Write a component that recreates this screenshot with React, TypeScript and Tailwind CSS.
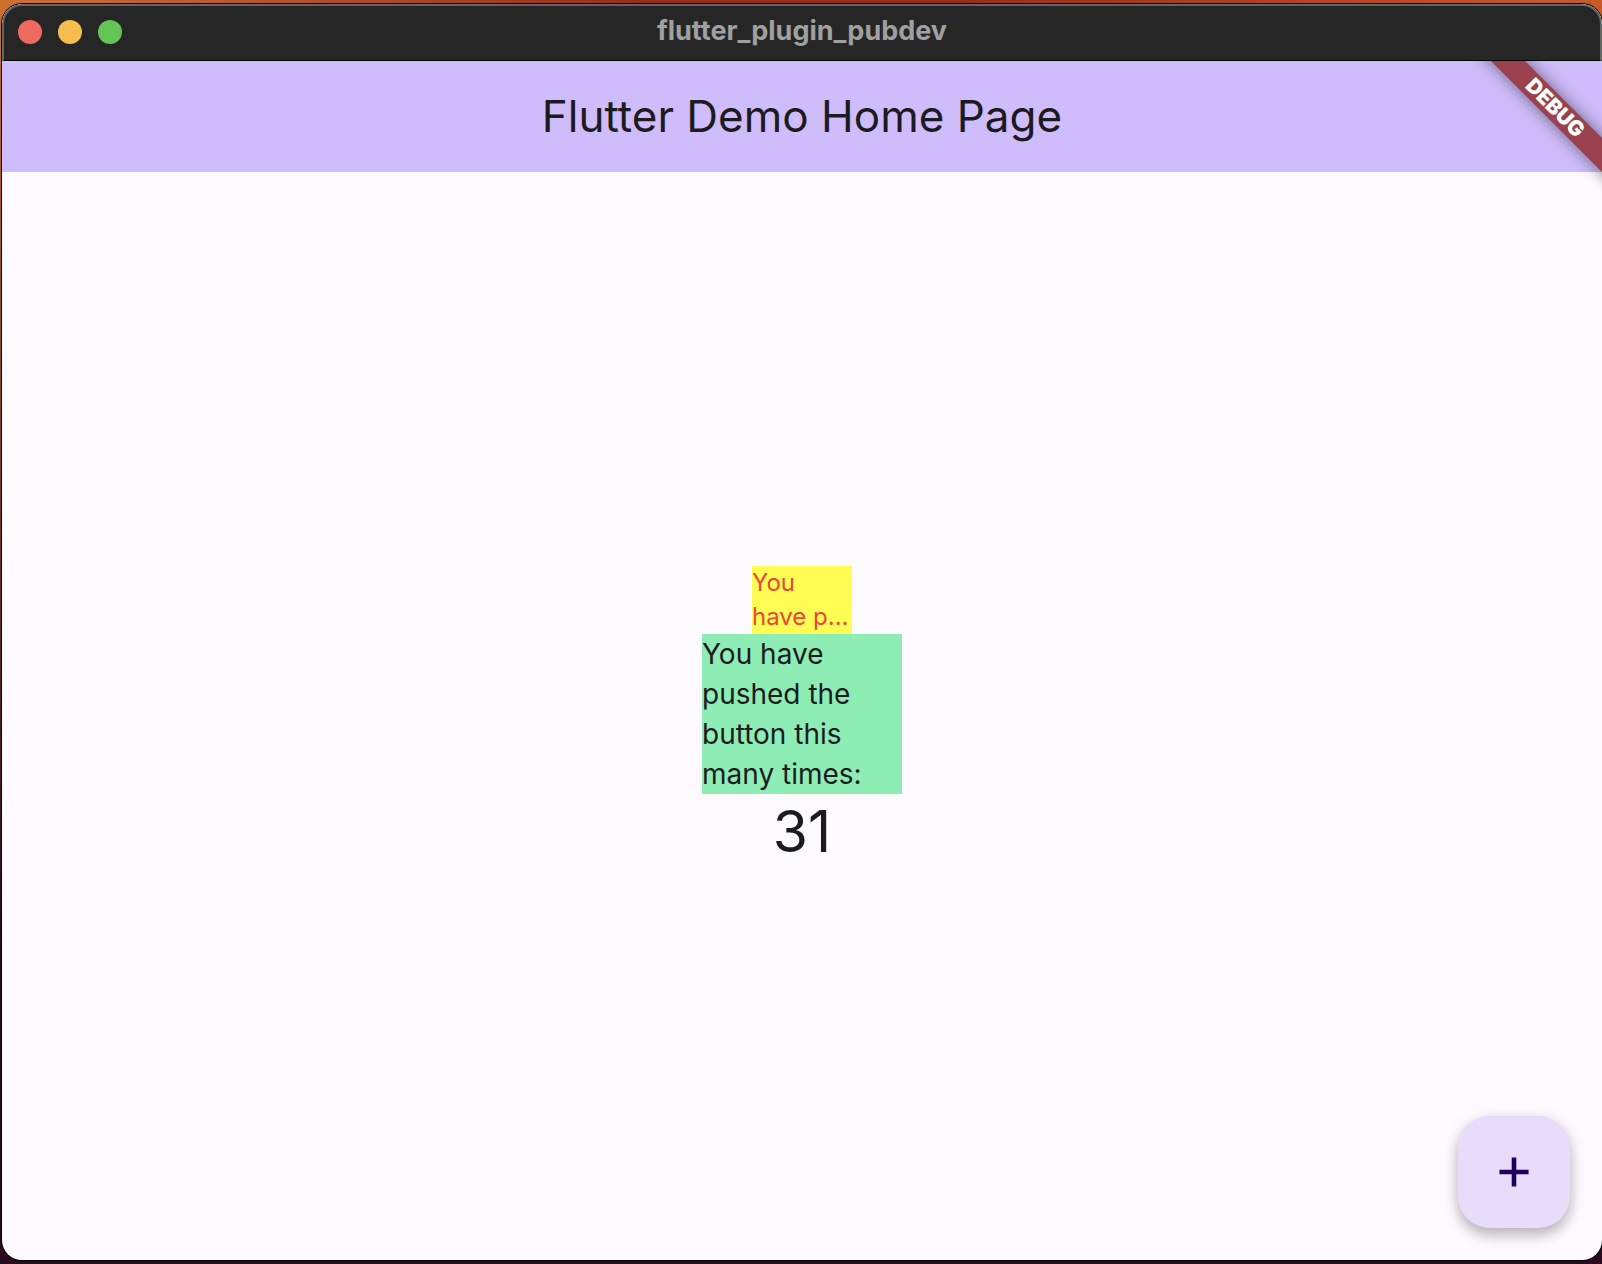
import { useState } from "react";

export default function App() {
  const [count, setCount] = useState(31);
  return (
    <div className="min-h-screen flex flex-col pt-1 pb-1 pl-0.5 bg-[linear-gradient(to_bottom,transparent_0%,#2a0a1f_75%),linear-gradient(to_right,#d0702f,#9a2c1c_40%,#9a2c1c_60%,#c85a28)] font-['Inter',sans-serif]">
      <div className="relative grow flex flex-col rounded-[20px] overflow-hidden ring-1 ring-black bg-[#fdfbff]">
        <header className="relative h-[57px] shrink-0 flex items-start justify-center bg-[#262626] rounded-t-[20px] border-t-2 border-x-2 border-[#636764] border-b border-b-black">
          <div className="absolute left-3.5 top-3.5 flex gap-4">
            <button aria-label="Close" className="size-6 rounded-full bg-[#ee6a5f]" />
            <button aria-label="Minimize" className="size-6 rounded-full bg-[#f5be4f]" />
            <button aria-label="Zoom" className="size-6 rounded-full bg-[#62c554]" />
          </div>
          <h1 className="pt-2 text-[27px] leading-[34px] font-bold text-[#a0a0a0]">flutter_plugin_pubdev</h1>
        </header>
        <div className="relative h-[111px] shrink-0 flex items-center justify-center pb-0.5 bg-[#cfbdfb]">
          <h2 className="text-[44px] leading-[56px] text-[#1c1b1f]">Flutter Demo Home Page</h2>
        </div>
        <div className="absolute top-[57px] right-0 size-[140px] overflow-hidden pointer-events-none">
          <div className="absolute top-[35px] -right-[53px] w-[200px] h-6 rotate-45 bg-[#99424d] shadow-[0_0_16px_rgba(0,0,0,0.5)] flex items-center justify-center text-[21px] leading-6 font-black text-white">
            DEBUG
          </div>
        </div>
        <main className="grow flex flex-col items-center justify-center text-[#1c1b1f]">
          <p className="w-[100px] bg-[#fffd54] text-[#e8483c] text-[24px] leading-[34px] whitespace-nowrap">
            You
            <br />
            have p…
          </p>
          <p className="w-[200px] bg-[#8eecb5] text-[28px] leading-10">You have pushed the button this many times:</p>
          <output className="pt-1 text-[57px] leading-[68px]">{count}</output>
        </main>
        <button
          aria-label="Increment"
          onClick={() => setCount(count + 1)}
          className="absolute right-8 bottom-8 size-28 rounded-[32px] bg-[#e7ddfb] flex items-center justify-center shadow-[0_8px_14px_rgba(0,0,0,0.22),0_2px_16px_rgba(0,0,0,0.1)]"
        >
          <svg viewBox="0 0 24 24" className="size-[50px]" fill="#21005d">
            <path d="M19 13.1h-5.9V19h-2.2v-5.9H5v-2.2h5.9V5h2.2v5.9H19z" />
          </svg>
        </button>
      </div>
    </div>
  );
}
